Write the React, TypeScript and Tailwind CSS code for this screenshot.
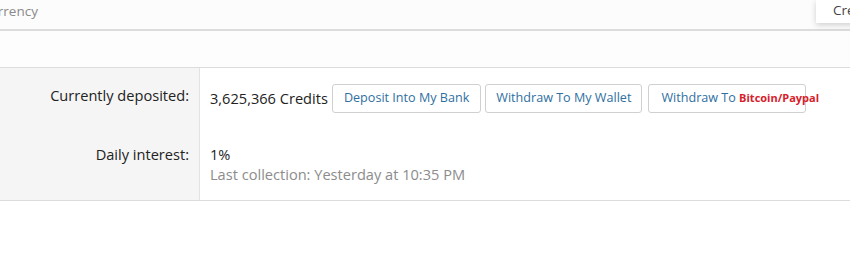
export default function App() {
  return (
    <div className="w-[850px] h-[254px] bg-white overflow-hidden relative text-[14.6px] text-[#222]" style={{ fontFamily: '"Open Sans", "Noto Sans", sans-serif' }}>
      {/* top strip */}
      <div className="h-[31px] bg-[#fcfcfc] border-b-2 border-[#dcdcdc] flex items-start">
        <span className="text-[13.5px] text-[#8a8a8a] -ml-[19px] mt-[1px]">Currency</span>
      </div>

      {/* dropdown peeking in */}
      <div className="absolute top-0 left-[816px] w-[60px] h-[23px] bg-white shadow-[0_2px_6px_rgba(0,0,0,0.18)] pl-[17px] text-[13.5px] text-[#444] leading-[21px]">
        Credits
      </div>

      <div className="h-[36px] bg-[#fdfdfd]" />

      {/* bank table */}
      <div className="border-t border-b border-[#dcdcdc]">
        <div className="flex">
          <div className="w-[200px] shrink-0 bg-[#f5f5f5] border-r border-[#e2e2e2] pt-[17px] pr-[10px] text-right leading-[20px]">
            Currently deposited:
          </div>
          <div className="flex-1 pl-[10px] pt-[16px] pb-[15px] flex items-center">
            <span className="mr-[4px]">3,625,366 Credits</span>
            <button className="h-[29px] px-[11px] border border-[#d0d0d0] rounded-[3px] bg-white text-[#2f6f9f] text-[12.6px]">
              Deposit Into My Bank
            </button>
            <button className="h-[29px] px-[10px] ml-[4px] border border-[#d0d0d0] rounded-[3px] bg-white text-[#2f6f9f] text-[12.6px]">
              Withdraw To My Wallet
            </button>
            <button className="h-[29px] w-[158px] pl-[12px] ml-[6px] border border-[#d0d0d0] rounded-[3px] bg-white text-[#2f6f9f] text-[12.6px] text-left whitespace-nowrap overflow-visible">
              Withdraw To <span className="text-[#d7202b] font-bold text-[11px]">Bitcoin/Paypal</span>
            </button>
          </div>
        </div>
        <div className="flex">
          <div className="w-[200px] shrink-0 bg-[#f5f5f5] border-r border-[#e2e2e2] pt-[16px] pb-[16px] pr-[10px] text-right leading-[20px]">
            Daily interest:
          </div>
          <div className="flex-1 pl-[10px] pt-[16px] pb-[16px] leading-[20px]">
            <div>1%</div>
            <div className="text-[#8c8c8c]">Last collection: Yesterday at 10:35 PM</div>
          </div>
        </div>
      </div>
    </div>
  );
}
